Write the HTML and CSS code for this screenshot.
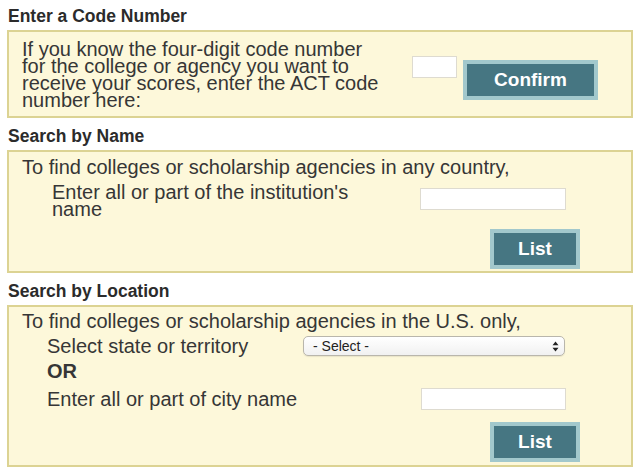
FILE: index.html
```html
<!DOCTYPE html>
<html>
<head>
<meta charset="utf-8">
<link rel="stylesheet" href="styles.css">
</head>
<body>
<div class="page">
  <h2 class="heading heading-first">Enter a Code Number</h2>
  <div class="panel panel-code">
    <p class="code-text">If you know the four-digit code number for the college or agency you want to receive your scores, enter the ACT code number here:</p>
    <input class="field field-code" type="text">
    <button class="btn btn-confirm">Confirm</button>
  </div>

  <h2 class="heading">Search by Name</h2>
  <div class="panel panel-name">
    <p class="intro">To find colleges or scholarship agencies in any country,</p>
    <div class="row row-name">
      <label class="label label-name">Enter all or part of the institution's name</label>
      <input class="field field-name" type="text">
    </div>
    <div class="btn-row">
      <button class="btn btn-list">List</button>
    </div>
  </div>

  <h2 class="heading">Search by Location</h2>
  <div class="panel panel-loc">
    <p class="intro">To find colleges or scholarship agencies in the U.S. only,</p>
    <div class="row row-state">
      <label class="label label-state">Select state or territory</label>
      <span class="select-wrap">
        <select class="select"><option>- Select -</option></select>
        <svg class="select-arrows" width="7" height="11" viewBox="0 0 7 11"><path d="M3.5 0.5 L6.5 4.2 L0.5 4.2 Z M3.5 10.5 L6.5 6.8 L0.5 6.8 Z" fill="#222"/></svg>
      </span>
    </div>
    <div class="or">OR</div>
    <div class="row row-city">
      <label class="label label-city">Enter all or part of city name</label>
      <input class="field field-city" type="text">
    </div>
    <div class="btn-row btn-row-loc">
      <button class="btn btn-list">List</button>
    </div>
  </div>
</div>
</body>
</html>
```

FILE: styles.css
```css
html, body {
  margin: 0;
  padding: 0;
  background: #ffffff;
}

.page {
  padding: 6px 7px 0 7px;
  font-family: "Liberation Sans", Arial, Helvetica, sans-serif;
  color: #363636;
  font-size: 20px;
  line-height: 17px;
}

.heading {
  margin: 8px 0 4px 1px;
  font-size: 17.5px;
  line-height: 20px;
  font-weight: bold;
  color: #2b2b2b;
}

.heading-first {
  margin-top: 0;
}

.panel {
  background: #fdf8da;
  border: 2px solid #dcd393;
  padding: 0 0 0 13px;
}

.panel-code {
  display: flex;
  align-items: flex-start;
  padding-top: 9px;
  box-sizing: border-box;
  height: 88px;
}

.code-text {
  margin: 0;
  width: 360px;
  flex: 0 0 360px;
}

.field {
  background: #ffffff;
  border: 1px solid #dedbd0;
  box-sizing: border-box;
  height: 22px;
  padding: 0;
  margin: 0;
}

.field-code {
  width: 45px;
  margin-left: 30px;
  margin-top: 15px;
}

.btn {
  background: #467682;
  border: 4px solid #a2c8cc;
  color: #ffffff;
  font-family: "Liberation Sans", Arial, Helvetica, sans-serif;
  font-weight: bold;
  font-size: 19px;
  box-sizing: border-box;
  height: 40px;
  padding: 0;
  margin: 0;
}

.btn-confirm {
  width: 135px;
  margin-left: 6px;
  margin-top: 19px;
}

.intro {
  margin: 0;
}

.panel-name {
  padding-top: 7px;
  padding-bottom: 2px;
}

.row {
  display: flex;
}

.row-name {
  margin-top: 8px;
  align-items: flex-start;
}

.label-name {
  flex: 0 0 330px;
  margin-left: 30px;
}

.field-name {
  width: 146px;
  margin-left: 38px;
  margin-top: 4px;
}

.btn-row {
  display: flex;
  justify-content: flex-end;
  padding-right: 51px;
  margin-top: 11px;
}

.btn-list {
  width: 90px;
}

.panel-loc {
  padding-top: 6px;
  padding-bottom: 3px;
}

.row-state {
  margin-top: 6px;
  align-items: center;
  height: 20px;
}

.label-state {
  flex: 0 0 256px;
  margin-left: 25px;
}

.select-wrap {
  position: relative;
  display: inline-block;
  width: 262px;
  height: 20px;
}

.select {
  -webkit-appearance: none;
  appearance: none;
  width: 262px;
  height: 20px;
  box-sizing: border-box;
  border: 1px solid #b9b6ac;
  border-radius: 5px;
  background: linear-gradient(#ffffff, #f1f1f1);
  font-family: "Liberation Sans", Arial, Helvetica, sans-serif;
  font-size: 14px;
  color: #222;
  padding: 0 0 0 9px;
  margin: 0;
  box-shadow: 0 1px 1px rgba(0,0,0,0.08);
}

.select-arrows {
  position: absolute;
  right: 6px;
  top: 5px;
  pointer-events: none;
}

.or {
  margin: 7px 0 0 25px;
  font-weight: bold;
}

.row-city {
  margin-top: 8px;
  align-items: center;
  height: 22px;
}

.label-city {
  flex: 0 0 374px;
  margin-left: 25px;
}

.field-city {
  width: 145px;
}

.btn-row-loc {
  margin-top: 12px;
}
```
